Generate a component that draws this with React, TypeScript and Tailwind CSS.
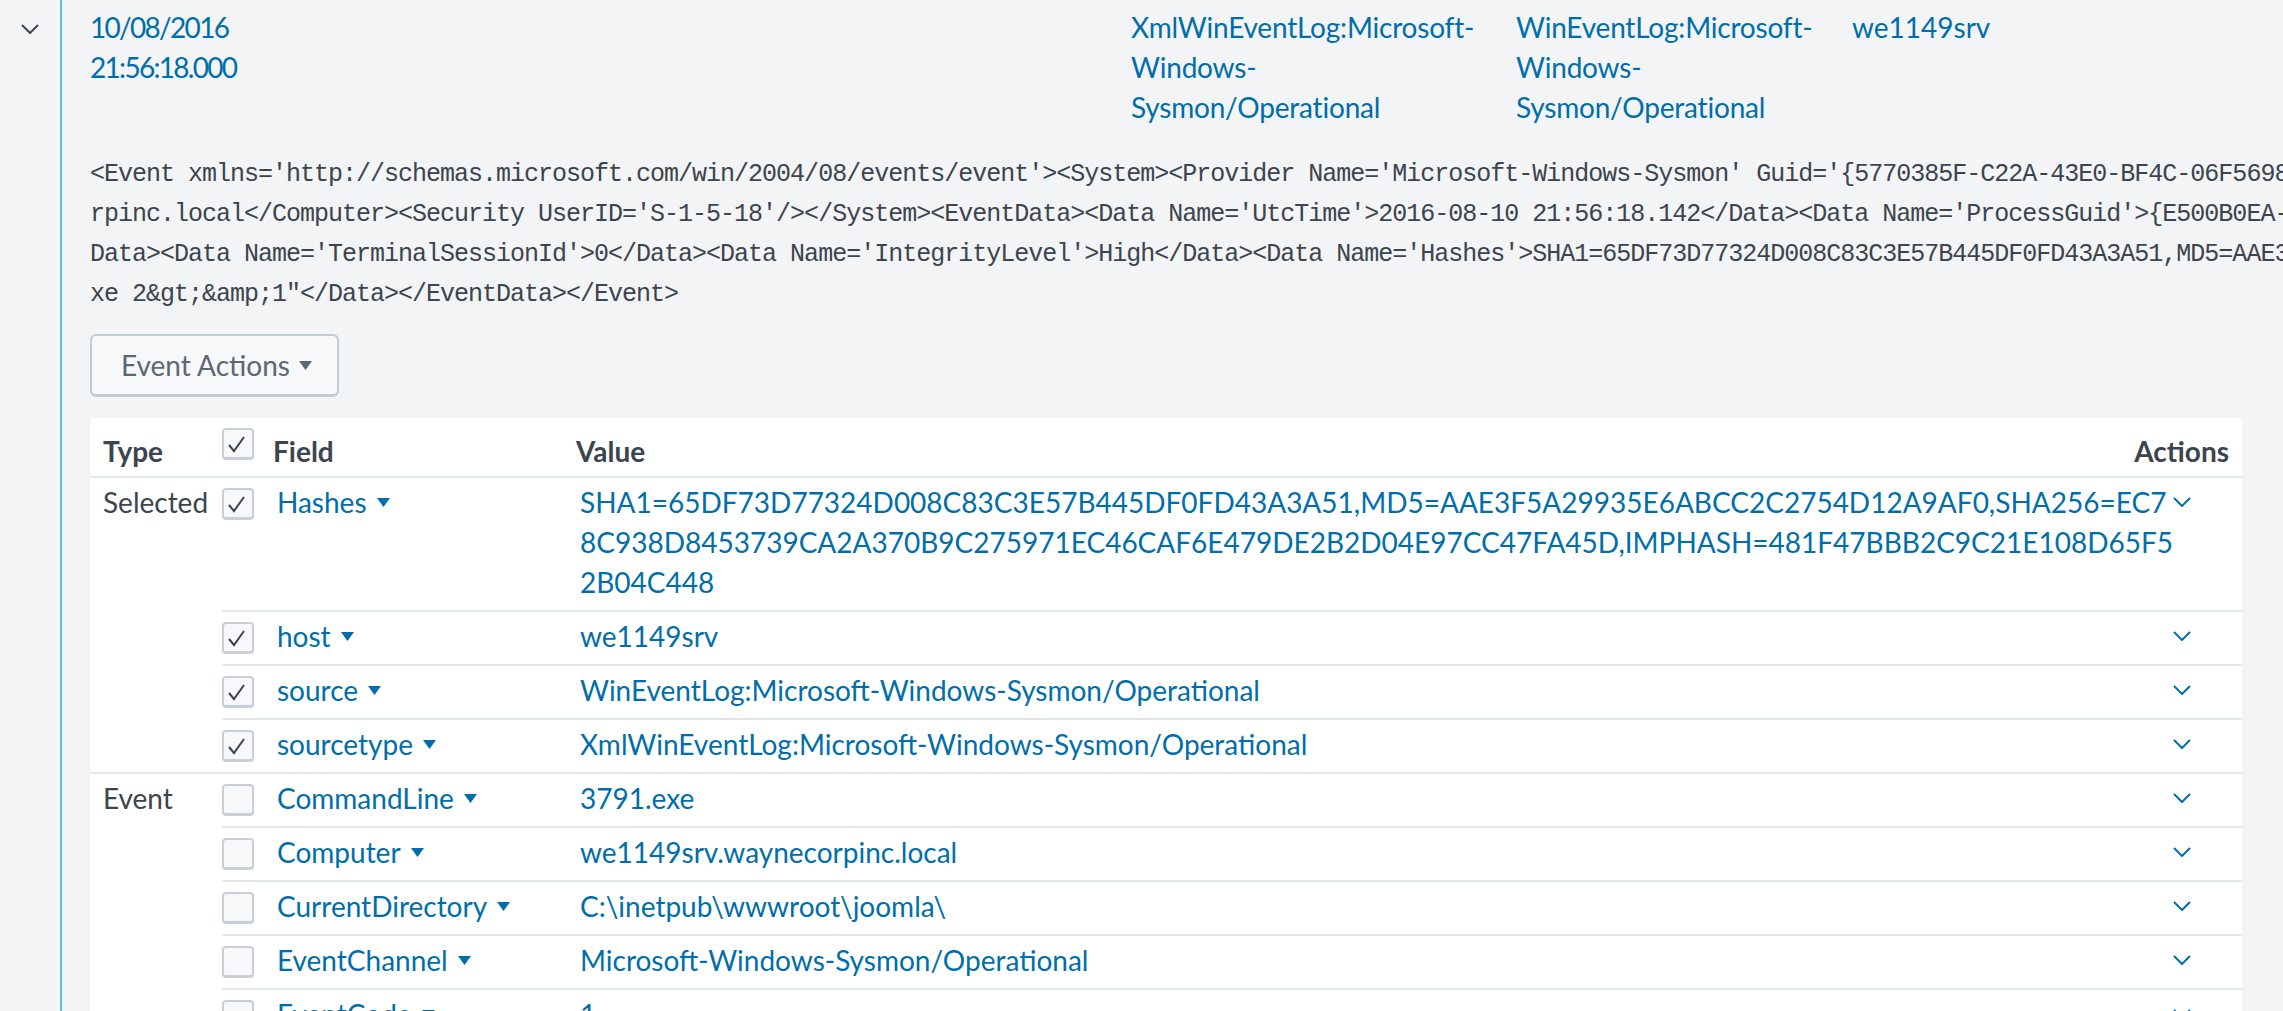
import React from "react";

const RAW_LINES = [
  "<Event xmlns='http://schemas.microsoft.com/win/2004/08/events/event'><System><Provider Name='Microsoft-Windows-Sysmon' Guid='{5770385F-C22A-43E0-BF4C-06F5698FFBD9}'/><EventID>1</EventID>",
  "rpinc.local</Computer><Security UserID='S-1-5-18'/></System><EventData><Data Name='UtcTime'>2016-08-10 21:56:18.142</Data><Data Name='ProcessGuid'>{E500B0EA-2B62-57AB-0000-0010",
  "Data><Data Name='TerminalSessionId'>0</Data><Data Name='IntegrityLevel'>High</Data><Data Name='Hashes'>SHA1=65DF73D77324D008C83C3E57B445DF0FD43A3A51,MD5=AAE3F5A29935E6ABCC2C",
  "xe 2&gt;&amp;1\"</Data></EventData></Event>",
];

type Row = { field: string; value: string[]; checked?: boolean };

const SELECTED: Row[] = [
  {
    field: "Hashes",
    checked: true,
    value: [
      "SHA1=65DF73D77324D008C83C3E57B445DF0FD43A3A51,MD5=AAE3F5A29935E6ABCC2C2754D12A9AF0,SHA256=EC7",
      "8C938D8453739CA2A370B9C275971EC46CAF6E479DE2B2D04E97CC47FA45D,IMPHASH=481F47BBB2C9C21E108D65F5",
      "2B04C448",
    ],
  },
  { field: "host", checked: true, value: ["we1149srv"] },
  { field: "source", checked: true, value: ["WinEventLog:Microsoft-Windows-Sysmon/Operational"] },
  { field: "sourcetype", checked: true, value: ["XmlWinEventLog:Microsoft-Windows-Sysmon/Operational"] },
];

const EVENT: Row[] = [
  { field: "CommandLine", value: ["3791.exe"] },
  { field: "Computer", value: ["we1149srv.waynecorpinc.local"] },
  { field: "CurrentDirectory", value: ["C:\\inetpub\\wwwroot\\joomla\\"] },
  { field: "EventChannel", value: ["Microsoft-Windows-Sysmon/Operational"] },
  { field: "EventCode", value: ["1"] },
  { field: "EventDescription", value: ["Process Create"] },
];

function Chevron({ color }: { color: string }) {
  return (
    <svg width="18" height="10" viewBox="0 0 18 10">
      <polyline points="1,1 9,9 17,1" fill="none" stroke={color} strokeWidth="2" />
    </svg>
  );
}

function Caret({ color }: { color: string }) {
  return (
    <svg width="13" height="9" viewBox="0 0 13 9">
      <path d="M0 0H13L6.5 9Z" fill={color} />
    </svg>
  );
}

function Checkbox({ checked }: { checked?: boolean }) {
  return (
    <div className="flex h-[32px] w-[32px] items-start rounded-[4px] border-2 border-b-[3px] border-[#c8cfd6] bg-[#f7f8fa]">
      {checked && (
        <svg width="28" height="27" viewBox="0 0 28 27">
          <polyline points="5,15 10,21 20,7" fill="none" stroke="#3c444d" strokeWidth="2" />
        </svg>
      )}
    </div>
  );
}

function FieldRow({ row, first }: { row: Row; first: boolean }) {
  return (
    <div className={first ? "flex" : "flex border-t-2 border-[#e1e6eb]"}>
      <div className="w-[55px] shrink-0 pt-[10px]">
        <Checkbox checked={row.checked} />
      </div>
      <div className="mt-1 flex h-[40px] w-[303px] shrink-0 items-center text-[#006eaa]">
        <span>{row.field}</span>
        <span className="ml-[10px] flex items-center">
          <Caret color="#006eaa" />
        </span>
      </div>
      <div className="min-w-0 flex-1 whitespace-nowrap pb-2 pt-1 text-[#006eaa]">
        {row.value.map((v) => (
          <div key={v}>{v}</div>
        ))}
      </div>
      <div className="mt-1 flex h-[40px] w-[120px] shrink-0 items-center justify-center">
        <Chevron color="#006eaa" />
      </div>
    </div>
  );
}

function Group({ label, rows, first }: { label: string; rows: Row[]; first: boolean }) {
  return (
    <div className={first ? "flex" : "flex border-t-2 border-[#e1e6eb]"}>
      <div className="w-[132px] shrink-0 pl-[13px] pt-1 text-[#3c444d]">{label}</div>
      <div className="flex min-w-0 flex-1 flex-col">
        {rows.map((r, i) => (
          <FieldRow key={r.field} row={r} first={i === 0} />
        ))}
      </div>
    </div>
  );
}

export default function App() {
  return (
    <div className="flex h-screen overflow-hidden bg-[#f2f4f5] font-['Lato',sans-serif] text-[28px] leading-[40px]">
      <div className="flex w-[60px] shrink-0 justify-center pt-[24px]">
        <div className="h-[10px]">
          <Chevron color="#3c444d" />
        </div>
      </div>
      <div className="w-[2px] shrink-0 bg-[#5cbcf0]" />
      <div className="min-w-0 flex-1 overflow-hidden pl-[28px]">
        <div className="flex pt-[7px] text-[#006eaa]">
          <div className="w-[1041px] shrink-0 tracking-[-1.7px]">
            <div>10/08/2016</div>
            <div>21:56:18.000</div>
          </div>
          <div className="w-[385px] shrink-0 tracking-[-0.2px]">
            <div>XmlWinEventLog:Microsoft-</div>
            <div>Windows-</div>
            <div>Sysmon/Operational</div>
          </div>
          <div className="w-[336px] shrink-0 tracking-[-0.2px]">
            <div>WinEventLog:Microsoft-</div>
            <div>Windows-</div>
            <div>Sysmon/Operational</div>
          </div>
          <div className="whitespace-nowrap">we1149srv</div>
        </div>

        <div className="mt-[28px] font-['Liberation_Mono',monospace] text-[25px] leading-[40px] tracking-[-1px] text-[#3c444d]">
          {RAW_LINES.map((l) => (
            <div key={l} className="whitespace-pre">
              {l}
            </div>
          ))}
        </div>

        <button className="mt-[19px] flex h-[63px] w-[249px] items-center rounded-[6px] border-2 border-b-[3px] border-[#c3cbd4] bg-[#f7f8fa] pl-[29px] text-[#5c6773]">
          <span>Event Actions</span>
          <span className="ml-[9px] flex items-center">
            <Caret color="#5c6773" />
          </span>
        </button>

        <div className="mt-[21px] w-[2152px] bg-white">
          <div className="flex h-[60px] border-b-2 border-[#e1e6eb] font-bold text-[#3c444d]">
            <div className="w-[132px] shrink-0 pl-[13px] pt-[13px]">Type</div>
            <div className="w-[51px] shrink-0 pt-[10px]">
              <Checkbox checked />
            </div>
            <div className="w-[303px] shrink-0 pt-[13px]">Field</div>
            <div className="flex-1 pt-[13px]">Value</div>
            <div className="w-[120px] shrink-0 pr-[13px] pt-[13px] text-right">Actions</div>
          </div>
          <Group label="Selected" rows={SELECTED} first />
          <Group label="Event" rows={EVENT} first={false} />
        </div>
      </div>
    </div>
  );
}
